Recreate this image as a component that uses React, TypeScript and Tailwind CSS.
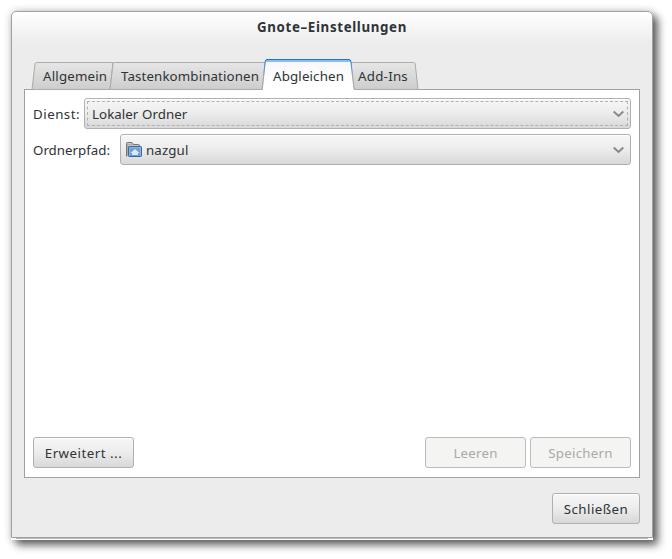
import type { ReactNode } from "react";

const raised =
  "border border-[#b0b0b0] bg-linear-to-b from-[#f7f7f7] via-[#ececec] to-[#d8d8d8] shadow-[inset_0_1px_0_#ffffff]";

function Label({ children, className = "" }: { children: ReactNode; className?: string }) {
  return <span className={`block shrink-0 whitespace-nowrap ${className}`}>{children}</span>;
}

function Chevron() {
  return (
    <svg width="12" height="8" viewBox="0 0 12 8" fill="none" className="ml-auto shrink-0">
      <path d="M1.7 1.5 L6.5 6 L11.3 1.5" stroke="#888a85" strokeWidth="2" />
    </svg>
  );
}

function HomeFolder() {
  return (
    <svg width="16" height="16" viewBox="0 0 16 16" fill="none" className="shrink-0">
      <path d="M.5 14.5V1.5Q.5.5 1.5.5H6L7.5 2.5H12.5Q13.5 2.5 13.5 3.5V6" fill="#aaa" stroke="#777" />
      <path d="M1.5 1.5H6M1.5 3.5H12.5" stroke="#c8c8c8" />
      <rect x="2.5" y="4.5" width="13" height="10" rx=".8" fill="#729fcf" stroke="#3465a4" />
      <path d="M3.5 13.5V5.5H14.5V13.5" stroke="#92b5de" />
      <path d="M9 7L13.5 11H12V13H6V11H4.5Z" fill="#dce8f6" />
    </svg>
  );
}

function Tab({ width, edge, className, children }: { width: number; edge: string; className: string; children: ReactNode }) {
  return (
    <div className={`relative h-[31px] shrink-0 pt-[7px] ${className}`}>
      <svg className="absolute left-0 top-0 overflow-visible" width={width} height="31" fill="none">
        <defs>
          <linearGradient id="tabFill" x1="0" y1="0" x2="0" y2="1">
            <stop offset="0" stopColor="#e6e6e6" />
            <stop offset="1" stopColor="#cdcdcd" />
          </linearGradient>
        </defs>
        <path d={edge} fill="url(#tabFill)" stroke="#a9aca8" />
      </svg>
      {children}
    </div>
  );
}

function ActiveTab() {
  return (
    <div className="relative z-10 h-[31px] w-[92px] shrink-0 pl-[11px] pt-[7px]">
      <svg className="absolute left-0 top-0 overflow-visible" width="92" height="31" fill="none">
        <defs>
          <linearGradient id="activeFill" x1="0" y1="0" x2="0" y2="1">
            <stop offset="0" stopColor="#f7f7f7" />
            <stop offset=".8" stopColor="#fff" />
          </linearGradient>
          <linearGradient id="activeEdge" x1="0" y1="0" x2="0" y2="30" gradientUnits="userSpaceOnUse">
            <stop offset="0" stopColor="#1f6fc9" />
            <stop offset=".25" stopColor="#4a90d9" />
            <stop offset=".65" stopColor="#a9aca8" />
          </linearGradient>
        </defs>
        <path d="M.5 31L3.3 2Q3.6 .5 5 .5H87Q88.5 .5 88.8 2L92 31" fill="url(#activeFill)" />
        <path d="M4 2H88.5" stroke="#8dbcf0" strokeWidth="2" />
        <path d="M.3 30.5L3.3 2Q3.6 .5 5 .5H87Q88.5 .5 88.8 2L92 30.5" stroke="url(#activeEdge)" />
      </svg>
      <Label className="relative tracking-[0.15px]">Abgleichen</Label>
    </div>
  );
}

function Button({ children, className, disabled = false }: { children: ReactNode; className: string; disabled?: boolean }) {
  return (
    <button
      disabled={disabled}
      className={`flex h-[31px] items-center justify-center rounded-[3px] ${
        disabled ? "border border-[#bbbbbb] bg-[#f4f4f2] text-[#a9aba8]" : raised
      } ${className}`}
    >
      {children}
    </button>
  );
}

export default function App() {
  return (
    <div className="h-[559px] w-[672px] overflow-hidden bg-white pl-[11px] pt-[11px] font-['Noto_Sans','Open_Sans',sans-serif] text-[13.3px] leading-[20px] text-[#2e3436]">
      <div className="h-[529px] w-[642px] rounded-t-[5px] bg-white shadow-[5px_5px_8px_rgba(0,0,0,0.6),0_0_8px_rgba(0,0,0,0.2)]">
        <main className="flex h-[527px] flex-col rounded-t-[5px] border border-[#a1a1a1] bg-[#ececec] bg-[linear-gradient(#ffffff_0px,#ececec_32px)]">
          <header className="flex h-[47px] shrink-0 justify-center pt-[5px] font-bold">
            <Label className="tracking-[0.65px]">Gnote–Einstellungen</Label>
          </header>
          <nav className="relative flex h-[30px] shrink-0 pl-[20px]">
            <Tab width={78} className="w-[78px] pl-[11px]" edge="M0 30.5L3 5Q3.3 3.5 4.5 3.5H81L78 30.5Z">
              <Label className="relative tracking-[0.18px]">Allgemein</Label>
            </Tab>
            <Tab width={152} className="w-[152px] pl-[11px]" edge="M0 30.5L3 5Q3.3 3.5 4.5 3.5H155L152 30.5Z">
              <Label className="relative tracking-[0.12px]">Tastenkombinationen</Label>
            </Tab>
            <ActiveTab />
            <Tab width={64} className="w-[64px] pl-[4px]" edge="M0 30.5L-3 3.5H59.5Q61 3.5 61.2 5L64 30.5Z">
              <Label className="relative tracking-[0.25px]">Add-Ins</Label>
            </Tab>
          </nav>
          <section className="ml-[12px] flex h-[389px] w-[616px] shrink-0 flex-col border border-[#a1a1a1] bg-white p-[8px]">
            <div className="flex h-[31px] items-center">
              <Label className="w-[51px] tracking-[0.5px]">Dienst:</Label>
              <div className={`h-[31px] grow rounded-[3px] p-[2px] ${raised}`}>
                <div className="flex h-[25px] items-center border border-dashed border-[#b2b2b2] pl-[4px] pr-[3px]">
                  <Label className="tracking-[0.06px]">Lokaler Ordner</Label>
                  <Chevron />
                </div>
              </div>
            </div>
            <div className="mt-[5px] flex h-[31px] items-center">
              <Label className="w-[87px]">Ordnerpfad:</Label>
              <div className={`flex h-[31px] grow items-center gap-[4px] rounded-[3px] pl-[5px] pr-[6px] ${raised}`}>
                <HomeFolder />
                <Label className="tracking-[0.12px]">nazgul</Label>
                <Chevron />
              </div>
            </div>
            <div className="mt-auto flex pb-px">
              <Button className="w-[101px]">
                <Label className="tracking-[0.5px]">Erweitert ...</Label>
              </Button>
              <Button disabled className="ml-auto w-[101px]">
                <Label className="tracking-[0.2px]">Leeren</Label>
              </Button>
              <Button disabled className="ml-[4px] w-[101px]">
                <Label className="tracking-[0.25px]">Speichern</Label>
              </Button>
            </div>
          </section>
          <footer className="flex justify-end pr-[12px] pt-[15px]">
            <Button className="w-[88px]">
              <Label className="tracking-[0.45px]">Schließen</Label>
            </Button>
          </footer>
        </main>
        <div className="mx-[5px] h-px bg-[#b5b5b5]" />
      </div>
    </div>
  );
}
